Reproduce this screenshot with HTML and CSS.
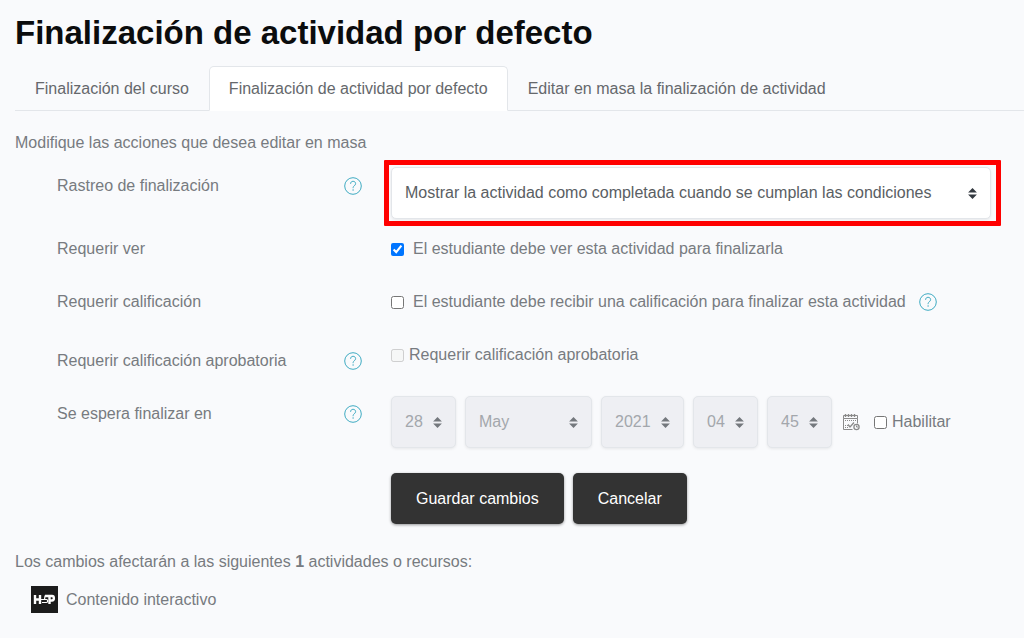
FILE: index.html
```
<!DOCTYPE html>
<html lang="es">
<head>
    <meta charset="UTF-8">
    <meta name="viewport" content="width=device-width, initial-scale=1.0">
    <title>Finalización de actividad por defecto</title>
    <link rel="stylesheet" href="styles.css">
</head>
<body>
    <svg class="sprite" aria-hidden="true">
        <symbol id="icon-help" viewBox="0 0 18 18">
            <circle cx="9" cy="9" r="8.3" fill="none" stroke="currentColor"/>
            <path d="M6.6 6.8c0-1.6 1-2.5 2.5-2.5s2.5 1 2.5 2.3c0 1-.6 1.6-1.3 2.2-.8.6-1.2 1-1.2 2.4" fill="none" stroke="currentColor"/>
            <circle cx="9.1" cy="13" r=".7" fill="currentColor"/>
        </symbol>
    </svg>

    <h1>Finalización de actividad por defecto</h1>

    <nav class="tabs">
        <a href="#" class="tab">Finalización del curso</a>
        <a href="#" class="tab active">Finalización de actividad por defecto</a>
        <a href="#" class="tab">Editar en masa la finalización de actividad</a>
    </nav>

    <main>
        <p class="intro">Modifique las acciones que desea editar en masa</p>

        <form>
            <div class="row row-tracking">
                <div class="row-label">
                    <label for="completion">Rastreo de finalización</label>
                    <a href="#" class="help" aria-label="Ayuda"><svg><use href="#icon-help"/></svg></a>
                </div>
                <div class="highlight">
                    <select id="completion" class="select select-wide">
                        <option>Mostrar la actividad como completada cuando se cumplan las condiciones</option>
                    </select>
                </div>
            </div>

            <div class="row">
                <div class="row-label"><span>Requerir ver</span></div>
                <div class="row-field">
                    <label class="check spaced"><input type="checkbox" checked>El estudiante debe ver esta actividad para finalizarla</label>
                </div>
            </div>

            <div class="row">
                <div class="row-label"><span>Requerir calificación</span></div>
                <div class="row-field">
                    <label class="check spaced"><input type="checkbox">El estudiante debe recibir una calificación para finalizar esta actividad</label>
                    <a href="#" class="help" aria-label="Ayuda"><svg><use href="#icon-help"/></svg></a>
                </div>
            </div>

            <div class="row row-pass">
                <div class="row-label label-low">
                    <span>Requerir calificación aprobatoria</span>
                    <a href="#" class="help" aria-label="Ayuda"><svg><use href="#icon-help"/></svg></a>
                </div>
                <div class="row-field">
                    <label class="check"><input type="checkbox" disabled>Requerir calificación aprobatoria</label>
                </div>
            </div>

            <div class="row row-date">
                <div class="row-label label-low">
                    <span>Se espera finalizar en</span>
                    <a href="#" class="help" aria-label="Ayuda"><svg><use href="#icon-help"/></svg></a>
                </div>
                <div class="row-field date">
                    <select class="select" aria-label="Día" disabled><option>28</option></select>
                    <select class="select select-month" aria-label="Mes" disabled><option>May</option></select>
                    <select class="select" aria-label="Año" disabled><option>2021</option></select>
                    <select class="select" aria-label="Hora" disabled><option>04</option></select>
                    <select class="select" aria-label="Minuto" disabled><option>45</option></select>
                    <a href="#" class="calendar" aria-label="Calendario">
                        <svg viewBox="0 0 18 18" fill="none" stroke="currentColor">
                            <path d="M1.5 2.5h14v3h-14z"/>
                            <path d="M3.5 1v3M6.5 1v3M9.5 1v3M12.5 1v3" stroke-width="1.4"/>
                            <path d="M1.5 5.5v11h9M15.5 5.5v5"/>
                            <path d="M3 7.5h12" stroke-dasharray="1 1"/>
                            <path d="M3 12.5h3M3 14.5h3" stroke-dasharray="1 1"/>
                            <path d="M6 11.5l2 2.5 4-4.5" stroke-width="1.3"/>
                            <circle cx="14.5" cy="14" r="2.6" stroke-width="1.3"/>
                            <path d="M14.5 12.5V14H16"/>
                        </svg>
                    </a>
                    <label class="check"><input type="checkbox">Habilitar</label>
                </div>
            </div>

            <div class="row row-buttons">
                <div class="row-label"></div>
                <div class="row-field buttons">
                    <button type="submit" class="btn">Guardar cambios</button>
                    <button type="button" class="btn">Cancelar</button>
                </div>
            </div>
        </form>

        <p class="affected">Los cambios afectarán a las siguientes <strong>1</strong> actividades o recursos:</p>
        <div class="activity">
            <svg viewBox="0 0 27 27" role="img" aria-label="H5P">
                <rect width="27" height="27" fill="#1c1c1c"/>
                <g fill="none" stroke="#fff">
                    <path d="M4 9v9M9 9v9M4 13.5h5" stroke-width="2.4"/>
                    <path d="M17 10h-3l-.5 3.500h2c1.500 0 1.500 3 0 3h-4.500M10 13.500h3.500" stroke-width="1.200"/>
                    <path d="M14 10h4M18.500 18v-8h2.500c2.500 0 2.500 4.500 0 4.500h-2.500" stroke-width="2.400"/>
                </g>
            </svg>
            <span>Contenido interactivo</span>
        </div>
    </main>
</body>
</html>
```
FILE: styles.css
```
* {
    box-sizing: border-box;
}

body {
    margin: 0;
    padding: 12px 0 24px 15px;
    background: #f9fafc;
    color: #777b80;
    font-family: Arial, "Liberation Sans", sans-serif;
    font-size: 16px;
    line-height: 24px;
}

h1 {
    margin: 0 0 12px;
    color: #0b0c0d;
    font-size: 33px;
    line-height: 42px;
}

p {
    margin: 0;
}

a {
    color: inherit;
    text-decoration: none;
}

.sprite {
    display: none;
}

.tabs {
    display: flex;
    border-bottom: 1px solid #e3e6ea;
}

.tab {
    margin-bottom: -1px;
    padding: 10px 19px 9px;
    border: 1px solid transparent;
    border-radius: 5px 5px 0 0;
    color: #65686c;
}

.tab.active {
    background: #fff;
    border-color: #e3e6ea #e3e6ea #fff;
}

.intro {
    margin: 20px 0 5px;
}

.row {
    display: flex;
    align-items: flex-start;
    gap: 29px;
    padding-left: 42px;
    margin-bottom: 29px;
}

.row-tracking {
    margin-bottom: 11px;
}

.row-label {
    display: flex;
    flex: 0 0 305px;
    justify-content: space-between;
}

.row-tracking .row-label {
    padding-top: 14px;
}

.label-low {
    padding-top: 6px;
}

.row-field {
    display: flex;
    align-items: center;
    gap: 13px;
}

.help {
    height: 24px;
    padding-top: 3px;
    color: #3fabc2;
}

.help svg {
    display: block;
    width: 18px;
    height: 18px;
}

.highlight {
    margin-left: -7px;
    padding: 2px 5px 2px 2px;
    border: 5px solid #f00;
    border-radius: 1px;
}

.select {
    appearance: none;
    height: 52px;
    padding: 0 32px 0 13px;
    border: 1px solid #e3e6ea;
    border-radius: 5px;
    background: #fff url("data:image/svg+xml,%3Csvg xmlns='http://www.w3.org/2000/svg' viewBox='0 0 4 5'%3E%3Cpath fill='%23343a40' d='M2 0L0 2h4zm0 5L0 3h4z'/%3E%3C/svg%3E") no-repeat right 13px center / 9px 11px;
    box-shadow: 0 1px 3px rgba(0, 0, 0, 0.08);
    color: #5a5e63;
    font: inherit;
}

.select:disabled {
    background-color: #eeeff3;
    background-image: url("data:image/svg+xml,%3Csvg xmlns='http://www.w3.org/2000/svg' viewBox='0 0 4 5'%3E%3Cpath fill='%2374787d' d='M2 0L0 2h4zm0 5L0 3h4z'/%3E%3C/svg%3E");
    color: #a3a7ac;
    opacity: 1;
}

.select-wide {
    display: block;
    padding-right: 58px;
}

.select-month {
    width: 127px;
}

.check {
    display: flex;
    align-items: center;
    gap: 5px;
}

.check.spaced {
    gap: 9px;
}

.check input {
    width: 13px;
    height: 13px;
    margin: 0;
}

.row-pass {
    margin-bottom: 23px;
}

.row-date {
    margin-bottom: 25px;
}

.date {
    gap: 9px;
}

.calendar {
    padding: 0 5px 0 1px;
    color: #8a8a8a;
}

.calendar svg {
    display: block;
    width: 18px;
    height: 18px;
}

.buttons {
    gap: 9px;
}

.row-buttons {
    margin-bottom: 26px;
}

.btn {
    height: 51px;
    padding: 0 25px;
    border: 0;
    border-radius: 5px;
    background: #333;
    box-shadow: 0 1px 3px rgba(0, 0, 0, 0.4);
    color: #fff;
    font: inherit;
}

.activity {
    display: flex;
    align-items: center;
    gap: 8px;
    margin-top: 12px;
    padding-left: 16px;
}

.activity svg {
    width: 27px;
    height: 27px;
}
```
